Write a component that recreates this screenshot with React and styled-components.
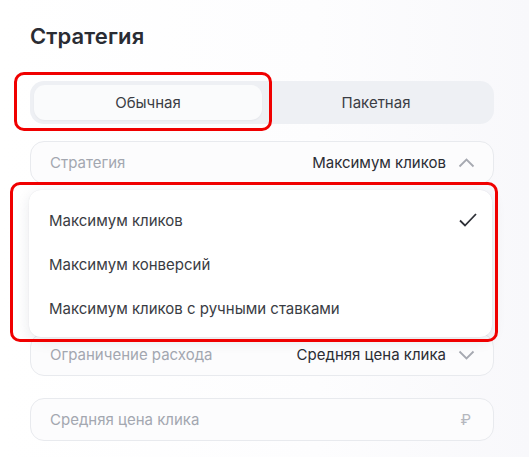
import styled, { createGlobalStyle } from "styled-components";

const GlobalStyle = createGlobalStyle`
  html, body {
    margin: 0;
    padding: 0;
    background: #fdfdfe;
    font-family: Inter, "Open Sans", "Liberation Sans", sans-serif;
  }
`;

const Page = styled.div`
  box-sizing: border-box;
  width: 529px;
  height: 457px;
  padding: 22px 35px 0 30px;
  background: linear-gradient(90deg, #ffffff 0%, #fdfdfe 60%, #f8f8fb 100%);
  overflow: hidden;
`;

const Title = styled.h2`
  margin: 0;
  font-size: 22px;
  line-height: 28px;
  font-weight: 600;
  color: #2a2c33;
  letter-spacing: 0.1px;
`;

const Annotated = styled.div`
  position: relative;
  display: flow-root;
  margin-top: ${(p) => p.$mt || 0}px;
`;

const RedFrame = styled.div`
  position: absolute;
  top: ${(p) => p.$top}px;
  left: ${(p) => p.$left}px;
  right: ${(p) => p.$right}px;
  bottom: ${(p) => p.$bottom}px;
  border: 3px solid #f00000;
  border-radius: 10px;
  pointer-events: none;
  z-index: 5;
`;

const Segmented = styled.div`
  display: grid;
  grid-template-columns: 1fr 1fr;
  height: 43px;
  box-sizing: border-box;
  padding: 4px;
  background: #eef0f4;
  border-radius: 14px;
`;

const Segment = styled.div`
  display: flex;
  align-items: center;
  justify-content: center;
  border-radius: 11px;
  font-size: 15px;
  color: #3b3d44;
  background: ${(p) => (p.$active ? "#fafbfc" : "transparent")};
  box-shadow: ${(p) => (p.$active ? "0 1px 2px rgba(0,0,0,0.04)" : "none")};
`;

const Field = styled.div`
  box-sizing: border-box;
  height: 43px;
  margin-top: ${(p) => p.$mt || 0}px;
  display: flex;
  align-items: center;
  padding: 0 18px 0 19px;
  border: 1px solid #e8eaee;
  border-radius: 14px;
  background: #fcfcfd;
  font-size: 15px;
`;

const Label = styled.span`
  flex: 1;
  color: #a3a7b0;
`;

const Value = styled.span`
  color: #2b2d34;
  margin-right: 12px;
`;

const Suffix = styled.span`
  color: #b4b7be;
  font-size: 15px;
  margin-right: 4px;
`;

const Dropdown = styled.div`
  position: relative;
  z-index: 3;
  margin: 6px 2px -4px -1px;
  padding: 8px 0 7px;
  background: #ffffff;
  border-radius: 12px;
  box-shadow: 0 4px 14px rgba(30, 40, 70, 0.1), 0 0 1px rgba(30, 40, 70, 0.12);
`;

const Option = styled.div`
  display: flex;
  align-items: center;
  justify-content: space-between;
  height: 44px;
  padding: 0 14px 0 20px;
  font-size: 15px;
  color: #3a3c43;
`;

function Chevron({ up }) {
  return (
    <svg width="17" height="10" viewBox="0 0 17 10" fill="none">
      <path
        d={up ? "M1.5 8.5L8.5 1.5L15.5 8.5" : "M1.5 1.5L8.5 8.5L15.5 1.5"}
        stroke="#a6a9b1"
        strokeWidth="1.8"
      />
    </svg>
  );
}

function Check() {
  return (
    <svg width="20" height="16" viewBox="0 0 20 16" fill="none">
      <path d="M2 8.5L7 13.5L18 2" stroke="#2e3037" strokeWidth="1.8" />
    </svg>
  );
}

const options = [
  "Максимум кликов",
  "Максимум конверсий",
  "Максимум кликов с ручными ставками",
];

export default function App() {
  return (
    <>
      <GlobalStyle />
      <Page>
        <Title>Стратегия</Title>
        <Annotated $mt={31}>
          <Segmented>
            <Segment $active>Обычная</Segment>
            <Segment>Пакетная</Segment>
          </Segmented>
          <RedFrame $top={-9} $left={-16} $right={222} $bottom={-7} />
        </Annotated>
        <Field $mt={17}>
          <Label>Стратегия</Label>
          <Value>Максимум кликов</Value>
          <Chevron up />
        </Field>
        <Annotated>
          <Dropdown>
            {options.map((o, i) => (
              <Option key={o}>
                {o}
                {i === 0 && <Check />}
              </Option>
            ))}
          </Dropdown>
          <RedFrame $top={-2} $left={-20} $right={-4} $bottom={-9} />
        </Annotated>
        <Field>
          <Label>Ограничение расхода</Label>
          <Value>Средняя цена клика</Value>
          <Chevron />
        </Field>
        <Field $mt={22}>
          <Label>Средняя цена клика</Label>
          <Suffix>₽</Suffix>
        </Field>
      </Page>
    </>
  );
}
